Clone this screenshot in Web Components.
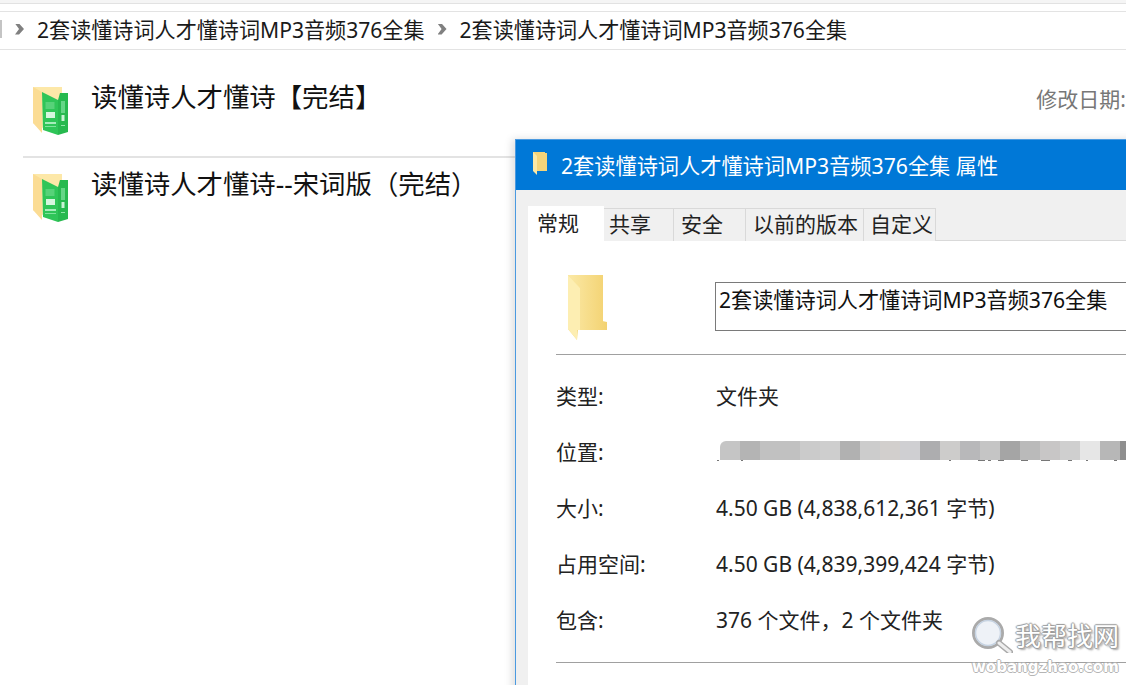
<!DOCTYPE html>
<html lang="zh">
<head>
<meta charset="utf-8">
<title>属性</title>
<style>
  html, body { margin: 0; height: 685px; overflow: hidden; background: #fff; }
  body { font-family: "Noto Sans", "Noto Sans CJK SC", sans-serif; color: #111; }
</style>
</head>
<body>
<explorer-page>
  <path-bar>
    <span>2套读懂诗词人才懂诗词MP3音频376全集</span>
    <span>2套读懂诗词人才懂诗词MP3音频376全集</span>
  </path-bar>
  <file-row date-label="修改日期:">读懂诗人才懂诗【完结】</file-row>
  <file-row>读懂诗人才懂诗--宋词版（完结）</file-row>
  <props-dialog slot="over" name="2套读懂诗词人才懂诗词MP3音频376全集">
    <prop-row label="类型:">文件夹</prop-row>
    <prop-row label="位置:"><blur-strip></blur-strip></prop-row>
    <prop-row label="大小:">4.50 GB (4,838,612,361 字节)</prop-row>
    <prop-row label="占用空间:">4.50 GB (4,839,399,424 字节)</prop-row>
    <prop-row label="包含:">376 个文件，2 个文件夹</prop-row>
  </props-dialog>
  <water-mark slot="over"></water-mark>
</explorer-page>

<script>
const FOLDER_SVG = `
  <svg viewBox="0 0 40 66" width="40" height="66" style="display:block">
    <defs>
      <linearGradient id="f" x1="0" x2="1" y1="0" y2="0">
        <stop offset="0" stop-color="#fbe9a6"/><stop offset="1" stop-color="#f3d271"/>
      </linearGradient>
    </defs>
    <path d="M0 0H35V46L39 47V55H10L9 65L0 54Z" fill="#f6dc86"/>
    <path d="M12 13V55H39V47H35V0H0Z" fill="url(#f)"/>
    <path d="M0 0L12 13V55H9L9 65L0 54Z" fill="#fdeeb2"/>
  </svg>`;

class ExplorerPage extends HTMLElement {
  constructor() {
    super();
    this.attachShadow({ mode: 'open' });
    this.shadowRoot.innerHTML = `
      <style>
        :host { display: block; position: relative; height: 685px; overflow: hidden; }
        .top { height: 3px; background: #f5f5f5; border-bottom: 1px solid #e2e2e2; }
        .gap { height: 7px; background: #fff; }
        .rows { display: flex; flex-direction: column; }
      </style>
      <div class="top"></div>
      <div class="gap"></div>
      <div class="rows"><slot></slot></div>
      <slot name="over"></slot>
    `;
  }
}

class PathBar extends HTMLElement {
  constructor() {
    super();
    this.attachShadow({ mode: 'open' });
    this.shadowRoot.innerHTML = `
      <style>
        :host {
          display: flex; align-items: center; gap: 13px; box-sizing: border-box;
          height: 39px; padding: 0 0 3px 15px;
          border-top: 1px solid #e3e3e3; border-bottom: 1px solid #e3e3e3;
          font-size: 21.1px; color: #1a1a1a; white-space: nowrap;
        }
        ::slotted(span) { display: flex; align-items: center; gap: 13px; }
        ::slotted(span)::before {
          content: ''; width: 9px; height: 11px; flex: none; background: #808080;
          clip-path: polygon(0 0, 45% 0, 100% 50%, 45% 100%, 0 100%, 45% 50%);
        }
        .cut { position: absolute; left: 0; top: 20px; width: 2px; height: 18px; background: #c4c4c4; }
      </style>
      <div class="cut"></div>
      <slot></slot>
    `;
  }
}

class FileRow extends HTMLElement {
  constructor() {
    super();
    this.attachShadow({ mode: 'open' });
    const date = this.getAttribute('date-label');
    this.shadowRoot.innerHTML = `
      <style>
        :host {
          display: flex; align-items: flex-start; box-sizing: border-box;
          margin-left: 23px; height: 87px; padding-top: 6px;
          font-size: 26.4px; color: #111; white-space: nowrap;
        }
        :host(:first-of-type) { height: 108px; padding-top: 27px; border-bottom: 2px solid #e3e3e3; }
        svg { flex: none; margin: 10px 23px 0 10px; }
        .name { flex: 1; line-height: 38px; margin-top: 1px; }
        .date { font-size: 21px; color: #777; margin-top: 7px; line-height: 30px; }
      </style>
      <svg viewBox="0 0 35 50" width="35" height="50">
        <path d="M0 0H29V42H12L0 36Z" fill="#fde8a8"/>
        <path d="M0 0L9 5V46L0 36Z" fill="#fbdc94"/>
        <path d="M9 5L25 13V48L10 43Z" fill="#2fc558"/>
        <path d="M25 13L27 6H35V45L25 48Z" fill="#27b94f"/>
        <rect x="12.5" y="15" width="9" height="7" fill="#57d279"/>
        <rect x="13" y="25" width="9" height="6" fill="#d6f6df"/>
        <rect x="12" y="35" width="11" height="2" fill="#a6ecbb"/>
        <rect x="12" y="39" width="11" height="1" fill="#7fe29c"/>
        <rect x="28" y="14" width="4" height="12" fill="#65d687"/>
        <rect x="28.5" y="28" width="3" height="6" fill="#c9f3d5"/>
        <rect x="28" y="38" width="4" height="1" fill="#8fe6a9"/>
      </svg>
      <span class="name"><slot></slot></span>
      ${date ? `<span class="date">${date}</span>` : ''}
    `;
  }
}

class PropsDialog extends HTMLElement {
  constructor() {
    super();
    this.attachShadow({ mode: 'open' });
    const name = this.getAttribute('name');
    const tabs = [['共享', 70, 5], ['安全', 72, 7], ['以前的版本', 118, 7], ['自定义', 72, 6]];
    this.shadowRoot.innerHTML = `
      <style>
        :host {
          display: block; position: absolute; left: 515px; top: 139px; width: 700px; height: 600px;
          box-sizing: border-box; background: #f0f0f0; border: 1px solid #4b9ae0; border-right: 0;
          box-shadow: -3px 0 8px rgba(0,0,0,.13);
          font-size: 21px; color: #222;
        }
        .title {
          display: flex; align-items: center; height: 50px; padding: 0 0 2px 17px; gap: 12px;
          box-sizing: border-box;
          background: #0078d7; color: #fff; font-size: 21.2px; white-space: nowrap;
        }
        .tabs { display: flex; align-items: flex-end; height: 51px; padding-left: 12px; }
        .tab {
          box-sizing: border-box; height: 33px; line-height: 31px;
          background: #f0f0f0; border: 1px solid #d9d9d9; border-left: 0; border-bottom: 0;
          font-size: 21px; white-space: nowrap; color: #222;
        }
        .tab.on { height: 35px; width: 76px; line-height: 35px; background: #fff; padding-left: 9px; border: 0; position: relative; z-index: 1; }
        .panel { background: #fff; margin-left: 12px; height: 500px; padding: 0 0 0 28px; border-top: 1px solid #d9d9d9; margin-top: -1px; }
        .head { display: flex; height: 114px; box-sizing: border-box; padding-top: 34px; border-bottom: 1px solid #a0a0a0; }
        .head .ico { width: 159px; padding-left: 12px; box-sizing: border-box; flex: none; }
        .input {
          box-sizing: border-box; height: 49px; margin-top: 7px; flex: 1;
          border: 1px solid #7a7a7a; padding-left: 3px; line-height: 33px;
          font-size: 21.15px; color: #111; white-space: nowrap;
        }
        .list { display: flex; flex-direction: column; padding: 12px 0 15px; border-bottom: 1px solid #a0a0a0; }
      </style>
      <div class="title">
        <svg viewBox="0 0 16 24" width="16" height="24">
          <path d="M0 0H12V1H14V19H4V21L0 18Z" fill="#f4d47a"/>
          <path d="M0 0L4 4V23L0 19Z" fill="#fbe8a6"/>
        </svg>
        <span>${name} 属性</span>
      </div>
      <div class="tabs">
        <div class="tab on">常规</div>
        ${tabs.map(([t, w, p]) => `<div class="tab" style="width:${w}px;padding-left:${p}px">${t}</div>`).join('')}
      </div>
      <div class="panel">
        <div class="head">
          <div class="ico">${FOLDER_SVG}</div>
          <div class="input">${name}</div>
        </div>
        <div class="list"><slot></slot></div>
      </div>
    `;
  }
}

class PropRow extends HTMLElement {
  constructor() {
    super();
    this.attachShadow({ mode: 'open' });
    this.shadowRoot.innerHTML = `
      <style>
        :host { display: grid; grid-template-columns: 160px 1fr; align-items: center; height: 56px; font-size: 21px; color: #222; white-space: nowrap; }
      </style>
      <span>${this.getAttribute('label')}</span>
      <span><slot></slot></span>
    `;
  }
}

class BlurStrip extends HTMLElement {
  constructor() {
    super();
    this.attachShadow({ mode: 'open' });
    const cols = ['#c5c5c5','#b4b4b4','#c1c1c1','#c1c1c1','#cbcbcb','#cecece','#b1b1b1','#cccccc','#d2cfcd','#cfcfd2',
                  '#adadaf','#cdcccb','#b8b8ba','#c5c5c5','#a5a5a5','#bababa','#c8c6c6','#cfcfcf','#e6e6e6','#b7b7b7','#8f8f8f'];
    // bits of the text that stick out under the mosaic
    const specks = [[1,2],[25,2],[233,2],[262,7],[272,3],[282,6],[305,7],[325,9],[352,4],[370,2],[398,3]];
    this.shadowRoot.innerHTML = `
      <style>
        :host { display: block; position: relative; height: 19px; margin-top: -1px; }
        .cols { display: flex; margin-left: 4px; }
        i { width: 20px; height: 19px; flex: none; }
        i:first-child { border-radius: 6px 0 0 0; }
        b { position: absolute; top: 19px; height: 1px; background: #777; }
      </style>
      <div class="cols">${cols.map(c => `<i style="background:${c}"></i>`).join('')}</div>
      ${specks.map(([x, w]) => `<b style="left:${x}px;width:${w}px"></b>`).join('')}
    `;
  }
}

class WaterMark extends HTMLElement {
  constructor() {
    super();
    this.attachShadow({ mode: 'open' });
    this.shadowRoot.innerHTML = `
      <style>
        :host {
          display: block; position: absolute; left: 972px; top: 617px; width: 154px;
          color: #fff; white-space: nowrap;
        }
        .line { display: flex; align-items: center; height: 36px; }
        svg { flex: none; margin-right: 2px; }
        .big {
          font-size: 26px;
          text-shadow: 1px 0 1px #999, -1px 0 1px #999, 0 1px 1px #999, 0 -1px 1px #999, 2px 2px 2px #aaa;
        }
        .small {
          font-family: "DejaVu Sans", sans-serif; font-weight: 700; font-size: 15px; line-height: 28px;
          text-shadow: 1px 0 0 #b5b5b5, -1px 0 0 #b5b5b5, 0 1px 0 #b5b5b5, 0 -1px 0 #b5b5b5;
        }
      </style>
      <div class="line">
        <svg viewBox="0 0 41 36" width="41" height="36">
          <circle cx="16" cy="16" r="14.5" fill="#eef2f7" stroke="#aaa" stroke-width="3"/>
          <circle cx="16" cy="16" r="12.5" fill="none" stroke="#c6d3e2" stroke-width="1.5"/>
          <path d="M27 26L38 35" stroke="#aaa" stroke-width="6" stroke-linecap="round"/>
          <path d="M27 26L38 35" stroke="#eee" stroke-width="3" stroke-linecap="round"/>
        </svg>
        <span class="big">我帮找网</span>
      </div>
      <div class="small">wobangzhao.com</div>
    `;
  }
}

customElements.define('explorer-page', ExplorerPage);
customElements.define('path-bar', PathBar);
customElements.define('file-row', FileRow);
customElements.define('props-dialog', PropsDialog);
customElements.define('prop-row', PropRow);
customElements.define('blur-strip', BlurStrip);
customElements.define('water-mark', WaterMark);
</script>
</body>
</html>
